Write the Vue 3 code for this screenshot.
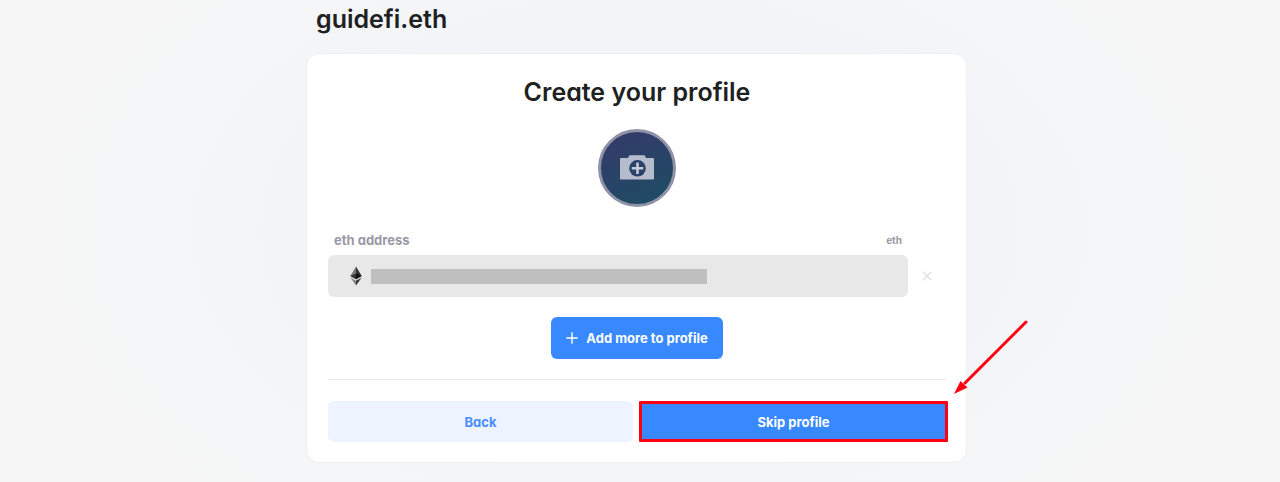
<script setup>
import { ref } from 'vue'

const name = ref('guidefi.eth')
const address = ref('')
</script>

<template>
  <main class="page">
    <div class="column">
      <h1 class="name">{{ name }}</h1>
      <section class="card">
        <h2 class="title">Create your profile</h2>
        <button class="avatar" type="button" aria-label="Add avatar">
          <svg width="36" height="26" viewBox="0 0 36 26" aria-hidden="true">
            <path d="M2 3H9L10 .8Q10.300 .3 11 .3H25Q25.700 .3 26 .8L27 3H34Q35 3 35 4V23.500Q35 24.500 34 24.500H2Q1 24.500 1 23.500V4Q1 3 2 3Z" fill="#b5bccb" />
            <circle cx="18.500" cy="13.300" r="8.300" fill="#29436a" />
            <path d="M18.500 7.600V19M12.800 13.300H24.200" stroke="#c5cbd6" stroke-width="2.600" />
          </svg>
        </button>
        <div class="record">
          <div class="labels">
            <label for="eth-address">eth address</label>
            <span class="key">eth</span>
          </div>
          <div class="field">
            <svg width="12" height="20" viewBox="0 0 12 20" aria-hidden="true">
              <path d="M6 .5L.3 10 6 13.300Z" fill="#777" />
              <path d="M6 .5L11.700 10 6 13.300Z" fill="#303030" />
              <path d="M6 7.400L.3 10 6 13.300Z" fill="#333" />
              <path d="M6 7.400L11.700 10 6 13.300Z" fill="#111" />
              <path d="M.3 11.400L6 14.700V19.500Z" fill="#858585" />
              <path d="M11.700 11.400L6 14.700V19.500Z" fill="#343434" />
            </svg>
            <div class="value">
              <input id="eth-address" v-model="address" type="text" />
              <span class="mask"></span>
            </div>
          </div>
          <button class="remove" type="button" aria-label="Remove eth address">
            <svg width="10" height="10" viewBox="0 0 10 10" aria-hidden="true">
              <path d="M.7 .7L9.300 9.300M9.300 .7L.7 9.300" stroke="#e2e2e2" stroke-width="1.500" />
            </svg>
          </button>
        </div>
        <button class="btn add" type="button">
          <svg width="12" height="12" viewBox="0 0 12 12" aria-hidden="true">
            <path d="M6 .3V11.700M.3 6H11.700" stroke="#fff" stroke-width="1.400" />
          </svg>
          Add more to profile
        </button>
        <hr class="rule" />
        <div class="actions">
          <button class="btn back" type="button">Back</button>
          <div class="target">
            <button class="btn skip" type="button">Skip profile</button>
            <svg class="arrow" width="76" height="76" viewBox="0 0 76 76" aria-hidden="true">
              <path d="M73 3L12 64" stroke="#ff0010" stroke-width="3" stroke-linecap="round" />
              <path d="M1 75L7.500 62 14.500 68.500Z" fill="#ff0010" />
            </svg>
          </div>
        </div>
      </section>
    </div>
  </main>
</template>

<style>
body {
  background: #f7f7f7;
}
</style>

<style scoped>
* {
  box-sizing: border-box;
}
.page {
  min-height: 100vh;
  padding: 0 7px 20px 0;
  background: radial-gradient(ellipse 640px 400px at 50% 230px, #f1f3f8 0%, #f2f4f7 50%, #f7f7f7 100%);
  font-family: Inter, "Liberation Sans", sans-serif;
  font-feature-settings: "cv11";
  color: #1e2122;
}
.column {
  max-width: 661px;
  margin: 0 auto;
}
.name,
.title {
  margin: 0;
  font-size: 25px;
  font-weight: 600;
  line-height: 32px;
}
.name {
  padding: 3px 10px 18px;
}
.card {
  display: flex;
  flex-direction: column;
  align-items: center;
  padding: 22px 20px 20px 21px;
  background: #fff;
  border: 1px solid #eeeff1;
  border-radius: 13px;
}
button {
  padding: 0;
  border: 0;
  background: none;
  font: inherit;
  cursor: pointer;
}
.avatar {
  display: grid;
  place-items: center;
  width: 78px;
  height: 78px;
  margin-top: 21px;
  border: 3px solid #9192a7;
  border-radius: 50%;
  background: linear-gradient(155deg, #323c69 15%, #1f4c65 90%);
}
.record {
  display: grid;
  grid-template-columns: 1fr 38px;
  width: 100%;
  margin-top: 24px;
}
.labels {
  display: flex;
  align-items: center;
  justify-content: space-between;
  height: 18px;
  margin-bottom: 6px;
  padding: 0 6px;
  grid-column: 1;
  color: #9999a5;
  font-size: 13px;
  font-weight: 700;
}
.key {
  font-size: 10px;
}
.field {
  display: flex;
  grid-column: 1;
  align-items: center;
  gap: 9px;
  height: 42px;
  padding: 0 22px;
  border-radius: 6px;
  background: #e8e8e8;
}
.value {
  position: relative;
  flex: 1;
}
.value input {
  display: block;
  width: 100%;
  height: 30px;
  padding: 0;
  border: 0;
  outline: 0;
  background: transparent;
  font: inherit;
  font-size: 13px;
}
.mask {
  position: absolute;
  top: 8px;
  left: 0;
  width: 336px;
  max-width: 100%;
  height: 15px;
  background: #bfbfbf;
}
.remove {
  display: grid;
  place-items: center;
}
.btn {
  height: 41px;
  border-radius: 6px;
  font-size: 13px;
  font-weight: 700;
}
.add {
  display: flex;
  align-items: center;
  gap: 8px;
  height: 42px;
  margin-top: 20px;
  padding: 0 15px;
  background: #3888ff;
  color: #fff;
}
.rule {
  width: 100%;
  height: 1px;
  margin: 20px 0 21px;
  border: 0;
  background: #e8e8e8;
}
.actions {
  display: grid;
  grid-template-columns: 1fr 1fr;
  gap: 8px;
  width: 100%;
}
.back {
  background: #eef4ff;
  color: #4a8dff;
}
.target {
  position: relative;
}
.skip {
  width: 100%;
  background: #3888ff;
  color: #fff;
}
.target::after {
  content: "";
  position: absolute;
  inset: 0 -2px;
  border: 3px solid #ff0010;
  border-radius: 1px;
  pointer-events: none;
}
.arrow {
  position: absolute;
  right: -83px;
  bottom: 47px;
}
</style>
